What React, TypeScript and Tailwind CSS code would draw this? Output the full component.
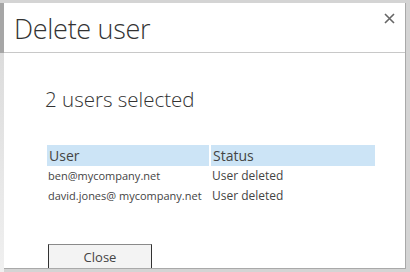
import React from 'react';

const rows = [
  { user: 'ben@mycompany.net', status: 'User deleted' },
  { user: 'david.jones@ mycompany.net', status: 'User deleted' },
];

export default function App() {
  return (
    <div
      className="w-[410px] h-[272px] overflow-hidden bg-[#d4d4d4] pt-[3px] pr-[4px] flex"
      style={{ fontFamily: '"Open Sans", "Noto Sans", sans-serif' }}
    >
      <div className="w-[4px] flex flex-col">
        <div className="h-[50px] bg-[#a6a6a6]" />
        <div className="flex-1 bg-gradient-to-b from-[#dcdcdc] to-[#f0f0f0]" />
      </div>
      <div className="flex-1 h-[266px] overflow-hidden bg-white border-r border-b border-[#a9a9a9] flex flex-col text-[#333]">
        <div className="h-[50px] shrink-0 border-b border-[#c8c8c8] flex items-start justify-between pl-[10px] pr-[10px]">
          <h1 className="text-[27px] font-light leading-none mt-[12px] tracking-[-0.3px]">Delete user</h1>
          <button className="mt-[9px] w-[12px] h-[12px] flex items-center justify-center">
            <svg width="11" height="11" viewBox="0 0 11 11">
              <path d="M1 1L10 10M10 1L1 10" stroke="#666" strokeWidth="1.6" />
            </svg>
          </button>
        </div>
        <div className="pl-[41px] pr-[30px] flex flex-col">
          <p className="text-[20.5px] font-light mt-[36px] leading-none">2 users selected</p>
          <div className="mt-[35px] ml-[2px] grid grid-cols-[162px_164px] gap-x-[2px] text-[#444]">
            <div className="bg-[#cce4f6] h-[21px] pl-[2px] text-[14px] leading-[21px]">User</div>
            <div className="bg-[#cce4f6] h-[21px] pl-[2px] text-[14px] leading-[21px]">Status</div>
            {rows.map((r) => (
              <React.Fragment key={r.user}>
                <div className="h-[20px] pl-[1px] text-[11px] leading-[20px] whitespace-nowrap">{r.user}</div>
                <div className="h-[20px] pl-[1px] text-[12px] leading-[20px]">{r.status}</div>
              </React.Fragment>
            ))}
          </div>
          <div className="mt-[38px]">
            <button className="w-[104px] h-[28px] bg-[#f3f3f3] border border-[#8a8a8a] border-x-[#333] text-[13px] text-[#444] ml-[3px]">
              Close
            </button>
          </div>
        </div>
      </div>
    </div>
  );
}
